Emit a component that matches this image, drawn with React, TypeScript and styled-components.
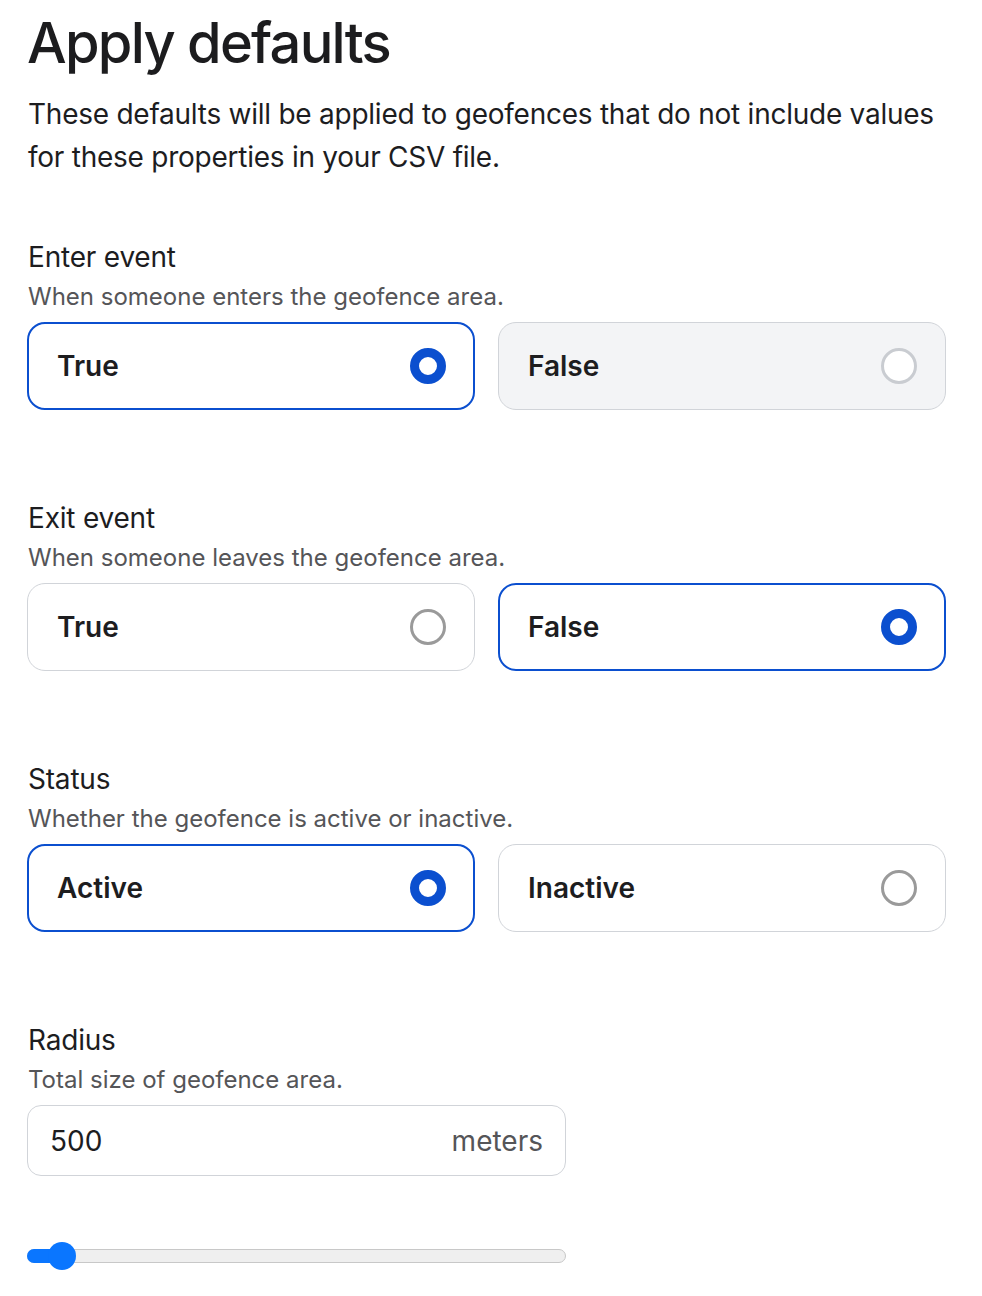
import React, {useState} from "react";
import styled, {createGlobalStyle} from "styled-components";

const GlobalStyle = createGlobalStyle`
    html, body {
        margin: 0;
        padding: 0;
        background: #ffffff;
    }

    body {
        font-family: Inter, "Noto Sans", "Liberation Sans", sans-serif;
        color: #1d1d1f;
        -webkit-font-smoothing: antialiased;
    }
`

type OptionType = {
    value: string,
    label: string,
    muted?: boolean,
}

type ChoiceFieldPropsType = {
    title: string,
    description: string,
    options: Array<OptionType>,
    selected: string,
    onSelect: (value: string) => void,
}

const ChoiceField = (props: ChoiceFieldPropsType) => {
    return (
        <StyledField>
            <StyledLabel>{props.title}</StyledLabel>
            <StyledHint>{props.description}</StyledHint>
            <StyledOptions>
                {props.options.map(option => {
                    const checked = option.value === props.selected;
                    return (
                        <StyledOption
                            key={option.value}
                            type="button"
                            $checked={checked}
                            $muted={!!option.muted && !checked}
                            onClick={() => props.onSelect(option.value)}
                        >
                            <span>{option.label}</span>
                            <StyledRadio $checked={checked} $muted={!!option.muted && !checked}/>
                        </StyledOption>
                    );
                })}
            </StyledOptions>
        </StyledField>
    );
};

const MIN_RADIUS = 100;
const MAX_RADIUS = 10000;

export default function App() {
    const [enter, setEnter] = useState("true");
    const [exit, setExit] = useState("false");
    const [status, setStatus] = useState("active");
    const [radius, setRadius] = useState(500);

    const percent = (radius - MIN_RADIUS) / (MAX_RADIUS - MIN_RADIUS);
    const thumbLeft = `calc(14px + ${percent} * (100% - 28px))`;

    return (
        <StyledPage>
            <GlobalStyle/>
            <StyledTitle>Apply defaults</StyledTitle>
            <StyledIntro>
                These defaults will be applied to geofences that do not include values
                for these properties in your CSV file.
            </StyledIntro>

            <ChoiceField
                title="Enter event"
                description="When someone enters the geofence area."
                options={[
                    {value: "true", label: "True"},
                    {value: "false", label: "False", muted: true},
                ]}
                selected={enter}
                onSelect={setEnter}
            />

            <ChoiceField
                title="Exit event"
                description="When someone leaves the geofence area."
                options={[
                    {value: "true", label: "True"},
                    {value: "false", label: "False"},
                ]}
                selected={exit}
                onSelect={setExit}
            />

            <ChoiceField
                title="Status"
                description="Whether the geofence is active or inactive."
                options={[
                    {value: "active", label: "Active"},
                    {value: "inactive", label: "Inactive"},
                ]}
                selected={status}
                onSelect={setStatus}
            />

            <StyledField>
                <StyledLabel>Radius</StyledLabel>
                <StyledHint>Total size of geofence area.</StyledHint>
                <StyledInputBox>
                    <StyledInput
                        value={radius}
                        inputMode="numeric"
                        onChange={e => {
                            const next = Number(e.target.value.replace(/\D/g, ""));
                            setRadius(Math.min(MAX_RADIUS, next));
                        }}
                    />
                    <StyledUnit>meters</StyledUnit>
                </StyledInputBox>
                <StyledSlider>
                    <StyledTrack/>
                    <StyledFill style={{width: thumbLeft}}/>
                    <StyledThumb style={{left: thumbLeft}}/>
                </StyledSlider>
            </StyledField>
        </StyledPage>
    );
}

const StyledPage = styled.div`
    width: 919px;
    padding: 11px 36px 40px 27px;
`

const StyledTitle = styled.h1`
    margin: 0;
    font-size: 56px;
    line-height: 64px;
    font-weight: 500;
    letter-spacing: -1.75px;
    color: #1c1c1e;
`

const StyledIntro = styled.p`
    margin: 18px -4px 0 1px;
    font-size: 28px;
    line-height: 43px;
    font-weight: 400;
    letter-spacing: -0.25px;
    color: #1d1d1f;
`

const StyledField = styled.section`
    display: flex;
    flex-direction: column;
    margin-top: 60px;

    & + & {
        margin-top: 90px;
    }
`

const StyledLabel = styled.h3`
    margin: 0 0 0 1px;
    font-size: 28px;
    line-height: 36px;
    font-weight: 400;
    letter-spacing: -0.2px;
    color: #1d1d1f;
`

const StyledHint = styled.p`
    margin: 6px 0 0 1px;
    font-size: 24px;
    line-height: 32px;
    font-weight: 400;
    color: #555558;
`

const StyledOptions = styled.div`
    display: grid;
    grid-template-columns: 1fr 1fr;
    gap: 23px;
    margin-top: 9px;
`

const StyledOption = styled.button<{ $checked: boolean, $muted: boolean }>`
    display: flex;
    align-items: center;
    justify-content: space-between;
    box-sizing: border-box;
    height: 88px;
    padding: 0 28px 0 ${p => p.$checked ? 28 : 29}px;
    border-radius: 18px;
    border: ${p => p.$checked ? "2px solid #0b4fcf" : "1px solid #d1d4d9"};
    background: ${p => p.$muted ? "#f3f4f6" : "#ffffff"};
    font-family: inherit;
    font-size: 28px;
    font-weight: 600;
    color: #1d1d1f;
    text-align: left;
    cursor: pointer;
`

const StyledRadio = styled.span<{ $checked: boolean, $muted: boolean }>`
    box-sizing: border-box;
    width: 36px;
    height: 36px;
    flex-shrink: 0;
    border-radius: 50%;
    margin-right: ${p => p.$checked ? -1 : 0}px;
    border: ${p => p.$checked
            ? "9px solid #0b4fcf"
            : `3px solid ${p.$muted ? "#c9ccd1" : "#9a9a9a"}`};
    background: #ffffff;
`

const StyledInputBox = styled.label`
    display: flex;
    align-items: center;
    box-sizing: border-box;
    width: 539px;
    height: 71px;
    margin-top: 9px;
    padding: 0 22px 0 22px;
    border: 1px solid #d1d4d9;
    border-radius: 14px;
    background: #ffffff;
`

const StyledInput = styled.input`
    flex: 1;
    min-width: 0;
    border: none;
    outline: none;
    padding: 0;
    background: transparent;
    font-family: inherit;
    font-size: 28px;
    color: #1d1d1f;
`

const StyledUnit = styled.span`
    font-size: 28px;
    color: #555558;
`

const StyledSlider = styled.div`
    position: relative;
    width: 539px;
    height: 28px;
    margin-top: 66px;
`

const StyledTrack = styled.div`
    position: absolute;
    left: 0;
    right: 0;
    top: 7px;
    height: 14px;
    box-sizing: border-box;
    border: 1px solid #c8c8c8;
    border-radius: 7px;
    background: #efefef;
`

const StyledFill = styled.div`
    position: absolute;
    left: 0;
    top: 7px;
    height: 14px;
    border-radius: 7px;
    background: #0a76ff;
`

const StyledThumb = styled.div`
    position: absolute;
    top: 0;
    width: 28px;
    height: 28px;
    margin-left: -14px;
    border-radius: 50%;
    background: #0a76ff;
`
